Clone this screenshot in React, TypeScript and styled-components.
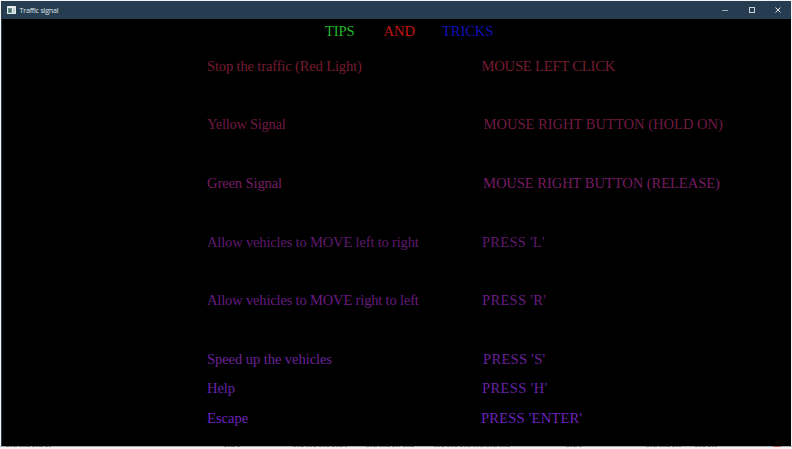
import React from "react";
import styled, { createGlobalStyle } from "styled-components";

const GlobalStyle = createGlobalStyle`
  html, body { margin: 0; padding: 0; background: #f4f5f5; }
  body { overflow: hidden; }
`;

const Desktop = styled.div`
  width: 792px;
  height: 449px;
  box-sizing: border-box;
  padding: 1px 1px 0 1px;
  display: flex;
  flex-direction: column;
  background: #f1f3f4;
  overflow: hidden;
`;

const Window = styled.section`
  height: 445px;
  flex: none;
  display: flex;
  flex-direction: column;
  background: #000;
  border-left: 1px solid #2d3b45;
`;

const TitleBar = styled.header`
  height: 18px;
  flex: none;
  display: flex;
  align-items: center;
  padding: 0 9px 0 5px;
  background: #253c51;
`;

const Title = styled.span`
  flex: 1;
  margin-left: 3.5px;
  font: 7.2px/18px "Open Sans", "Noto Sans", sans-serif;
  letter-spacing: -0.24px;
  color: #dfe5ea;
`;

const Controls = styled.div`
  display: flex;
  gap: 18.5px;

  svg { display: block; }
`;

const Screen = styled.main`
  flex: 1;
  font-family: "Liberation Serif", "Times New Roman", serif;
  font-size: 14.6px;
  white-space: pre;
`;

const Heading = styled.h1`
  display: flex;
  height: 24px;
  margin: 0 0 0 323px;
  font-size: 14.6px;
  font-weight: normal;
  line-height: 24px;
`;

const HeadingWord = styled.span<{ $color: string; $width: number }>`
  width: ${(p) => p.$width}px;
  letter-spacing: -0.1px;
  color: ${(p) => p.$color};
`;

const TipList = styled.div`
  display: flex;
  flex-direction: column;
  padding: 8.5px 0 0 205px;
`;

const TipRow = styled.div<{ $height: number; $color: string }>`
  display: flex;
  height: ${(p) => p.$height}px;
  line-height: 29px;
  color: ${(p) => p.$color};
`;

const Action = styled.span<{ $spacing: number }>`
  width: 274px;
  flex: none;
  letter-spacing: ${(p) => p.$spacing}px;
`;

const Keys = styled.span<{ $spacing: number; $indent: number }>`
  margin-left: ${(p) => p.$indent}px;
  letter-spacing: ${(p) => p.$spacing}px;
`;

const BottomEdge = styled.svg`
  display: block;
  flex: none;
  margin-left: -1px;
`;

type Tip = {
  action: string;
  actionSpacing: number;
  keys: string;
  keySpacing: number;
  indent: number;
  color: string;
  height: number;
};

const tips: Tip[] = [
  { action: "Stop the traffic (Red Light)", actionSpacing: -0.17, keys: "MOUSE LEFT CLICK", keySpacing: -0.2, indent: 0.5, color: "#761c30", height: 58.5 },
  { action: "Yellow Signal", actionSpacing: -0.3, keys: "MOUSE RIGHT BUTTON (HOLD ON)", keySpacing: -0.03, indent: 2.5, color: "#701a42", height: 58.5 },
  { action: "Green Signal", actionSpacing: -0.13, keys: "MOUSE RIGHT BUTTON (RELEASE)", keySpacing: -0.08, indent: 2, color: "#741c62", height: 59 },
  { action: "Allow vehicles to MOVE left to right", actionSpacing: -0.2, keys: "PRESS 'L'", keySpacing: 0.22, indent: 1, color: "#5f1a6e", height: 58.5 },
  { action: "Allow vehicles to MOVE right to left", actionSpacing: -0.2, keys: "PRESS 'R'", keySpacing: 0.27, indent: 1, color: "#681c82", height: 58.5 },
  { action: "Speed up the vehicles", actionSpacing: -0.09, keys: "PRESS 'S'", keySpacing: 0.27, indent: 2, color: "#6b2298", height: 29.5 },
  { action: "Help", actionSpacing: -0.1, keys: "PRESS 'H'", keySpacing: 0.35, indent: 1, color: "#6622a8", height: 29.5 },
  { action: "Escape", actionSpacing: 0, keys: "PRESS 'ENTER'", keySpacing: 0.18, indent: 0, color: "#6c24bc", height: 29.5 },
];

const edgeMarks = [
  [6, 45], [224, 17], [293, 54], [366, 34], [403, 12], [434, 76],
  [566, 16], [646, 35], [695, 22],
];

const AppIcon = () => (
  <svg width="9" height="8" viewBox="0 0 9 8">
    <rect width="9" height="8" rx="0.4" fill="#e4eae9" />
    <rect x="1" y="2" width="4" height="5" fill="#6f9290" />
    <rect x="2" y="3" width="2" height="3" fill="#416f68" />
    <rect x="6" y="2" width="2" height="5" fill="#c4d0d2" />
  </svg>
);

export default function App() {
  return (
    <>
      <GlobalStyle />
      <Desktop>
        <Window>
          <TitleBar>
            <AppIcon />
            <Title>Traffic signal</Title>
            <Controls>
              <svg width="8" height="8" viewBox="0 0 8 8"><path d="M1.2 4.5H7" stroke="#a4b0bb" /></svg>
              <svg width="8" height="8" viewBox="0 0 8 8"><rect x="1.5" y="1.5" width="5" height="5" fill="none" stroke="#cbd3da" /></svg>
              <svg width="8" height="8" viewBox="0 0 8 8"><path d="M1.5 1.5l5 5M6.5 1.5l-5 5" stroke="#dce2e7" /></svg>
            </Controls>
          </TitleBar>
          <Screen>
            <Heading>
              <HeadingWord $color="#22b52a" $width={58.5}>TIPS</HeadingWord>
              <HeadingWord $color="#c01717" $width={58.5}>AND</HeadingWord>
              <HeadingWord $color="#1111b8" $width={60}>TRICKS</HeadingWord>
            </Heading>
            <TipList>
              {tips.map((tip) => (
                <TipRow key={tip.action} $height={tip.height} $color={tip.color}>
                  <Action $spacing={tip.actionSpacing}>{tip.action}</Action>
                  <Keys $spacing={tip.keySpacing} $indent={tip.indent}>{tip.keys}</Keys>
                </TipRow>
              ))}
            </TipList>
          </Screen>
        </Window>
        <BottomEdge width="792" height="3" viewBox="0 0 792 3">
          <rect width="792" height="1" fill="#a2a8ab" />
          {edgeMarks.map(([x, w]) => (
            <path key={x} d={`M${x} 0.5h${w}`} stroke="#6a7175" strokeDasharray="3 1 2 1 4 2" />
          ))}
          <rect x="773" width="8" height="1" fill="#b25252" />
        </BottomEdge>
      </Desktop>
    </>
  );
}
